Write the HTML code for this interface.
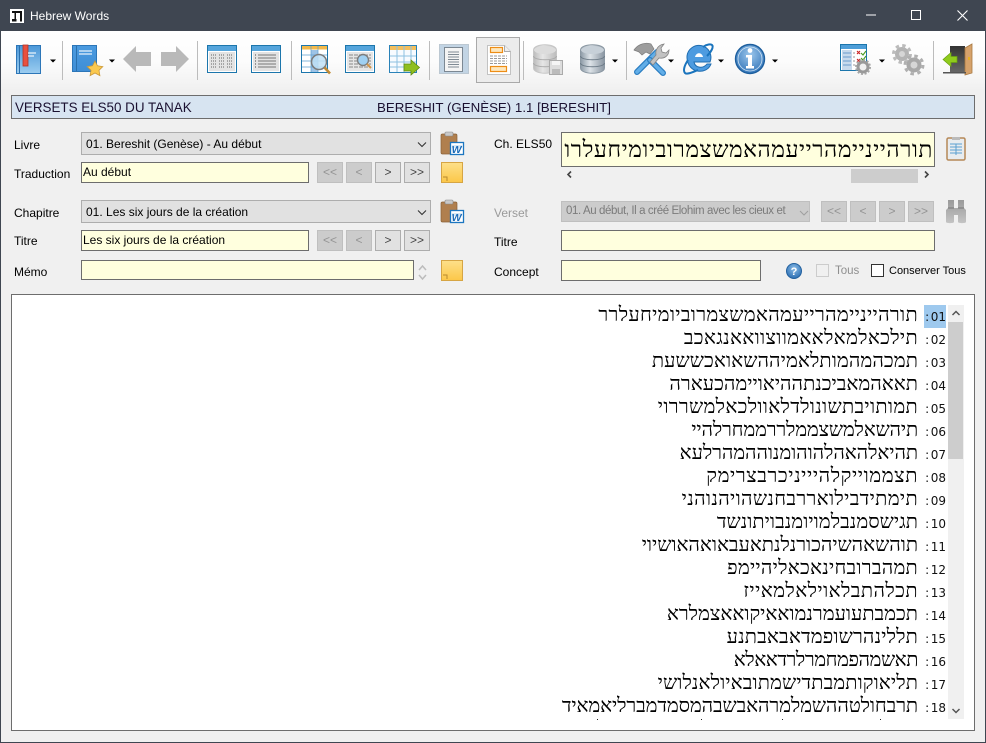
<!DOCTYPE html>
<html><head><meta charset="utf-8"><title>Hebrew Words</title>
<style>
html,body{margin:0;padding:0;width:986px;height:743px;overflow:hidden;background:#f0f0f0}
body{position:relative;font-family:"Liberation Sans",sans-serif;font-size:12px;color:#000}
.a{position:absolute;box-sizing:border-box;white-space:nowrap}
.l{position:absolute;white-space:nowrap;line-height:14px;font-size:12px}
.f{position:absolute;box-sizing:border-box;background:#ffffde;border:1px solid #6d6d6d;white-space:nowrap;padding-left:1px;line-height:19px;font-size:12px}
.c{position:absolute;box-sizing:border-box;background:#e1e1e1;border:1px solid #adadad;white-space:nowrap;padding-left:4px;line-height:23px;font-size:12px;overflow:hidden}
.b{position:absolute;box-sizing:border-box;width:26px;height:21px;background:#e1e1e1;border:1px solid #adadad;text-align:center;line-height:18px;font-size:12px;color:#444}
.d{background:#ccc;border-color:#bfbfbf;color:#949494}
.r{position:absolute;right:56px;white-space:nowrap;direction:rtl;font-family:"Liberation Serif",serif;font-size:20px;line-height:23px;height:23px;color:#000}
.n{position:absolute;left:924px;width:22px;height:23px;text-align:right;font-family:"DejaVu Sans",sans-serif;font-size:12px;line-height:24px;color:#111}
.n i{font-style:normal;margin-right:1.500px}
</style></head><body>
<div class="a" style="left:0;top:0;width:986px;height:31px;background:#3f4651"></div>
<div class="a" style="left:30px;top:9px;color:#fff;font-size:12px;line-height:14px">Hebrew Words</div>
<div class="a" style="left:0;top:31px;width:986px;height:60px;background:linear-gradient(#fff 0,#fcfcfc 30px,#f0f0f0 60px)"></div>
<div class="a" style="left:0;top:31px;width:1px;height:712px;background:#3f4651"></div>
<div class="a" style="left:985px;top:31px;width:1px;height:712px;background:#3f4651"></div>
<div class="a" style="left:0;top:742px;width:986px;height:1px;background:#3f4651"></div>
<div class="a" style="left:476px;top:37px;width:44px;height:46px;background:#ececec;border:1px solid #a9a9a9"></div>

<svg class="a" style="left:0;top:0" width="986" height="130" viewBox="0 0 986 130">
<defs>
<linearGradient id="bk" x1="0" y1="0" x2="0" y2="1"><stop offset="0" stop-color="#4a97d8"/><stop offset="1" stop-color="#9ccdf0"/></linearGradient>
<linearGradient id="bk2" x1="0" y1="0" x2="0" y2="1"><stop offset="0" stop-color="#4b9be0"/><stop offset="1" stop-color="#3f8ed6"/></linearGradient>
<linearGradient id="db" x1="0" y1="0" x2="1" y2="0"><stop offset="0" stop-color="#8b99a5"/><stop offset=".4" stop-color="#dde3e8"/><stop offset="1" stop-color="#8995a1"/></linearGradient>
<linearGradient id="dbg" x1="0" y1="0" x2="1" y2="0"><stop offset="0" stop-color="#bbb"/><stop offset=".4" stop-color="#e6e6e6"/><stop offset="1" stop-color="#bcbcbc"/></linearGradient>
<radialGradient id="inf" cx=".5" cy=".35" r=".7"><stop offset="0" stop-color="#9cc7ec"/><stop offset="1" stop-color="#2b6fb5"/></radialGradient>
<linearGradient id="dr" x1="0" y1="0" x2="0" y2="1"><stop offset="0" stop-color="#333"/><stop offset="1" stop-color="#666"/></linearGradient>
</defs>
<!-- title icon -->
<rect x="10" y="9" width="14" height="14" fill="#fff"/>
<path d="M12 11h10v10.500h-2V13h-4v6.500h-1.500V13H12z" fill="#111"/>
<path d="M12 19h4.500v2.500H12z" fill="#111"/>
<!-- window buttons -->
<path d="M866 15h10" stroke="#fff" stroke-width="1"/>
<rect x="911.500" y="10.500" width="9" height="9" fill="none" stroke="#fff"/>
<path d="M957.500 10.500l10 10M967.500 10.500l-10 10" stroke="#fff" stroke-width="1.100"/>
<!-- separators -->
<g fill="#bcbcbc"><rect x="62" y="41" width="1" height="39"/><rect x="197" y="41" width="1" height="39"/><rect x="291" y="41" width="1" height="39"/><rect x="429" y="41" width="1" height="39"/><rect x="523" y="41" width="1" height="39"/><rect x="626" y="41" width="1" height="39"/><rect x="933" y="41" width="1" height="39"/></g>
<!-- dropdown arrows -->
<g fill="#000"><path d="M50 59.500h6l-3 3zM109 59.500h6l-3 3zM612 59.500h6l-3 3zM668 59.500h6l-3 3zM718 59.500h6l-3 3zM772 59.500h6l-3 3zM879 59.500h6l-3 3z"/></g>
<!-- book 1 -->
<rect x="16.500" y="45.500" width="24" height="28" fill="url(#bk)" stroke="#2c76b8"/>
<rect x="19" y="46" width="1" height="27" fill="#2a70ad"/>
<rect x="23" y="45" width="5" height="21" fill="#e8503f" stroke="#b13327" stroke-width=".8"/>
<path d="M28 53h8M28 56h6" stroke="#e8f3fb" stroke-width="1.300"/>
<!-- book 2 -->
<rect x="72.500" y="45.500" width="24" height="26" fill="url(#bk2)" stroke="#2c76b8"/>
<rect x="76" y="46" width="1" height="25" fill="#2a70ad"/>
<path d="M79 51h13M79 54h13" stroke="#e8f3fb" stroke-width="1.300"/>
<path d="M95 61l2.500 4.800 5.300.8-3.800 3.700.9 5.300-4.900-2.600-4.900 2.600.9-5.300-3.800-3.700 5.300-.8z" fill="#fbc94f" stroke="#c9983a" stroke-width=".8"/>
<!-- arrows -->
<path d="M123 59l13-13v6h15v14h-15v6z" fill="#b9b9b9"/>
<path d="M189 59l-13-13v6h-15v14h15v6z" fill="#b9b9b9"/>
<!-- table 1 -->
<rect x="207.500" y="45.500" width="29" height="27" fill="#fff" stroke="#1c76ac"/>
<rect x="208" y="46" width="28" height="5" fill="#55a5dc"/>
<rect x="209" y="52" width="26" height="19" fill="#e3e3e3"/>
<path d="M211 55h6M219 55h6M227 55h6M211 58h6M219 58h6M227 58h6M211 61h6M219 61h6M227 61h6M211 64h6M219 64h6M227 64h6M211 67h6M219 67h6M227 67h6" stroke="#666" stroke-dasharray="1 1"/>
<!-- list -->
<rect x="251.500" y="45.500" width="29" height="27" fill="#fff" stroke="#1c76ac"/>
<rect x="252" y="46" width="28" height="5" fill="#55a5dc"/>
<rect x="253" y="52" width="26" height="19" fill="#e3e3e3"/>
<path d="M258 55h18M258 58h18M258 61h18M258 64h18M258 67h18" stroke="#777"/>
<path d="M255 55h1M255 58h1M255 61h1M255 64h1M255 67h1" stroke="#444"/>
<!-- table+lens -->
<rect x="301.500" y="45.500" width="26" height="27" fill="#fff" stroke="#1c76ac"/>
<rect x="302" y="46" width="25" height="3.500" fill="#f3b94a"/>
<rect x="311" y="50" width="7" height="22" fill="#9dc3e6"/>
<path d="M302 55h25M302 61h25M302 67h25M311 46v26M318 46v26" stroke="#5ea0d0" stroke-width=".7"/>
<circle cx="319" cy="62" r="7.500" fill="#bfe0f6" fill-opacity=".85" stroke="#7c7c7c" stroke-width="1.500"/>
<path d="M324.500 67.500l5.500 6" stroke="#c08a34" stroke-width="2.600"/>
<!-- list+lens -->
<rect x="345.500" y="45.500" width="29" height="27" fill="#fff" stroke="#1c76ac"/>
<rect x="346" y="46" width="28" height="5" fill="#55a5dc"/>
<rect x="347" y="52" width="26" height="19" fill="#e6e6e6"/>
<path d="M349 55h22M349 58h22M349 61h22M349 64h22M349 67h22" stroke="#888" stroke-dasharray="4 1"/>
<circle cx="363" cy="60" r="5.500" fill="#9fd0f2" stroke="#7d7d7d" stroke-width="1.400"/>
<path d="M367 64l4 4" stroke="#d0964a" stroke-width="2"/>
<!-- table arrow -->
<rect x="389.500" y="45.500" width="27" height="27" fill="#f7fbff" stroke="#2a82b8"/>
<rect x="390" y="46" width="26" height="4" fill="#f3bf5d"/>
<path d="M390 56h26M390 62h26M390 67h26M397 46v26M404 46v26M411 46v26" stroke="#8ec0e2"/>
<path d="M404 64h7v-4l8.500 7.500-8.500 7.500v-4h-7z" fill="#8fbf1f" stroke="#5e8c12" stroke-width=".8"/>
<!-- page view -->
<rect x="439.500" y="44.500" width="29" height="29" fill="#c2d4e4" stroke="#bcc8d2"/>
<rect x="444.500" y="47.500" width="18" height="24" fill="#f4f4f4" stroke="#7c8893"/>
<path d="M448 52h11M448 54.500h11M448 57h11M448 59.500h11M448 62h11M448 64.500h11M448 67h11" stroke="#7f8a94"/>
<!-- active doc -->
<path d="M487.500 45.500h17l6 6v23h-23z" fill="#fff" stroke="#c2c2c2"/>
<path d="M504.500 45.500v6h6" fill="#eee" stroke="#aaa"/>
<rect x="490.500" y="47.500" width="12" height="5" fill="#fde7bd" stroke="#ed8d16" stroke-width="1.200"/>
<path d="M490 56h17M490 58.500h17M490 61h17M490 63.500h17" stroke="#999" stroke-dasharray="3 1"/>
<rect x="490.500" y="66.500" width="16" height="5" fill="#fde7bd" stroke="#ed8d16" stroke-width="1.200"/>
<!-- db gray -->
<path d="M533.500 50c0-7 23-7 23 0v18c0 7-23 7-23 0z" fill="url(#dbg)" stroke="#c6c6c6"/>
<path d="M533.500 56c0 5 23 5 23 0M533.500 63c0 5 23 5 23 0" fill="none" stroke="#aaa"/>
<ellipse cx="545" cy="50" rx="11" ry="4" fill="#dcdcdc"/>
<rect x="549.500" y="60.500" width="13" height="14" fill="#ddd" stroke="#aaa"/>
<rect x="552" y="61" width="8" height="4" fill="#f5f5f5"/><rect x="552" y="69" width="8" height="5" fill="#bbb"/>
<!-- db -->
<path d="M580.500 50c0-7 24-7 24 0v18c0 7-24 7-24 0z" fill="url(#db)" stroke="#8a97a2"/>
<path d="M580.500 56c0 5 24 5 24 0M580.500 63c0 5 24 5 24 0" fill="none" stroke="#6d7b87"/>
<ellipse cx="592.500" cy="50" rx="11.500" ry="4" fill="#c7d0d8"/>
<!-- tools -->
<path d="M637 72l20-20" stroke="#2c7ec2" stroke-width="6" stroke-linecap="round"/>
<path d="M637 72l20-20" stroke="#62aee8" stroke-width="3.500" stroke-linecap="round"/>
<path d="M663 73l-13-13" stroke="#2c7ec2" stroke-width="6" stroke-linecap="round"/>
<path d="M663 73l-13-13" stroke="#62aee8" stroke-width="3.500" stroke-linecap="round"/>
<path d="M634 50c4-6 12-8 17-6l3 5-4 5-4-2-4 3-3-3c-2-1-3-1-5-2z" fill="#9d9d9d" stroke="#7d7d7d" stroke-width=".7"/>
<path d="M650 62l6-7c-1-5 2-10 8-11l-3 4 1 4 4 1 3-3c0 6-5 9-10 8l-6 7z" fill="#c2c2c2" stroke="#858585" stroke-width=".8"/>
<!-- IE -->
<path d="M687 56a12 12 0 1 1 23 6h-16c1 6 9 7 13 2h4c-4 11-23 10-24-6z" fill="#4d9be0" stroke="#1f6db0"/>
<path d="M695 57h8c-1-5-7-5-8 0z" fill="#fff"/>
<path d="M703 47c4-3 8-3 9-2 2 2-1 7-5 11M688 60c-4 6-5 11-3 13 2 2 8-1 13-3" fill="none" stroke="#1a74bd" stroke-width="2"/>
<!-- info -->
<circle cx="750" cy="59" r="14.500" fill="url(#inf)" stroke="#1e5f9e" stroke-width="1.400"/>
<circle cx="750" cy="59" r="12" fill="none" stroke="#cfe3f4" stroke-width=".8"/>
<circle cx="750" cy="50.500" r="2.400" fill="#fff"/>
<path d="M746 55h6v11h2v2.500h-8V66h2v-8.500h-2z" fill="#fff"/>
<!-- settings table -->
<rect x="840.500" y="44.500" width="26" height="26" fill="#fff" stroke="#1c76ac"/>
<rect x="841" y="45" width="25" height="4" fill="#4d9ed8"/>
<rect x="842" y="50" width="10" height="20" fill="#c7d9ec"/>
<path d="M843 53h8M843 57h8M843 61h8M843 65h8" stroke="#6b9acb"/>
<path d="M853 53h2M853 57h2M853 61h2M853 65h2" stroke="#999"/>
<path d="M857 51l3 3M860 51l-3 3M857 59l3 3M860 59l-3 3" stroke="#c22" stroke-width="1.100"/>
<path d="M861 53l2 2 3-4M861 58l2 2 3-4" fill="none" stroke="#4a9c20" stroke-width="1.100"/>
<circle cx="863" cy="67" r="5" fill="#f0f0f0" stroke="#999" stroke-width="3"/>
<circle cx="863" cy="67" r="7" fill="none" stroke="#a5a5a5" stroke-width="2" stroke-dasharray="2 1.660"/>
<!-- gears -->
<g><circle cx="902" cy="54" r="5" fill="#d6d6d6" stroke="#b4b4b4" stroke-width="4"/><circle cx="902" cy="54" r="8.500" fill="none" stroke="#bcbcbc" stroke-width="3" stroke-dasharray="3.400 3.270"/>
<circle cx="914" cy="65" r="5.500" fill="#d6d6d6" stroke="#a8a8a8" stroke-width="4"/><circle cx="914" cy="65" r="9" fill="none" stroke="#b0b0b0" stroke-width="3" stroke-dasharray="3.500 3.570"/></g>
<!-- door -->
<rect x="950" y="46" width="15" height="26" fill="url(#dr)"/>
<path d="M965 48l7-4v29l-7 2z" fill="#d6a26b" stroke="#a87942" stroke-width=".8"/>
<rect x="968" y="57" width="2" height="3" fill="#e8b020"/>
<path d="M943 72h23v1.500h-23z" fill="#555"/>
<path d="M943 59.500l8-7v4h6v6h-6v4z" fill="#8fcb1c" stroke="#6aa012" stroke-width=".7"/>
</svg>

<!-- header -->
<div class="a" style="left:11px;top:95px;width:964px;height:24px;background:#d7e4f1;border:1px solid #6d6d6d"></div>
<div class="l" style="left:15px;top:100px;font-size:13.400px;line-height:16px;color:#1a1030">VERSETS ELS50 DU TANAK</div>
<div class="l" style="left:377px;top:100px;font-size:13.300px;line-height:16px;color:#1a1030">BERESHIT (GENÈSE) 1.1 [BERESHIT]</div>

<!-- left form -->
<div class="l" style="left:14px;top:138px">Livre</div>
<div class="c" style="left:81px;top:132px;width:350px;height:23px">01. Bereshit (Genèse) - Au début</div>
<div class="l" style="left:14px;top:167px">Traduction</div>
<div class="f" style="left:81px;top:162px;width:228px;height:21px">Au début</div>
<div class="b d" style="left:317px;top:162px">&lt;&lt;</div><div class="b d" style="left:346px;top:162px">&lt;</div><div class="b" style="left:375px;top:162px">&gt;</div><div class="b" style="left:404px;top:162px">&gt;&gt;</div>
<div class="l" style="left:14px;top:206px">Chapitre</div>
<div class="c" style="left:81px;top:200px;width:350px;height:23px">01. Les six jours de la création</div>
<div class="l" style="left:14px;top:234px">Titre</div>
<div class="f" style="left:81px;top:230px;width:228px;height:21px">Les six jours de la création</div>
<div class="b d" style="left:317px;top:230px">&lt;&lt;</div><div class="b d" style="left:346px;top:230px">&lt;</div><div class="b" style="left:375px;top:230px">&gt;</div><div class="b" style="left:404px;top:230px">&gt;&gt;</div>
<div class="l" style="left:14px;top:265px">Mémo</div>
<div class="f" style="left:81px;top:260px;width:333px;height:20px"></div>

<!-- right form -->
<div class="l" style="left:494px;top:137px">Ch. ELS50</div>
<div class="f" style="left:561px;top:132px;width:374px;height:35px;padding:0 1px;overflow:hidden;direction:rtl;font-family:'Liberation Serif',serif;font-size:23px;line-height:33px;color:#000;letter-spacing:.55px">תורהייניימהרייעמהאמשצמרוביומיחעלרו</div>
<div class="a" style="left:851px;top:169px;width:67px;height:14px;background:#cdcdcd"></div>
<div class="l" style="left:494px;top:206px;color:#9a9a9a">Verset</div>
<div class="c d" style="left:561px;top:201px;width:249px;height:21px;line-height:19px;color:#7b7b7b;font-size:11.500px;letter-spacing:-.4px">01. Au début, Il a créé Elohim avec les cieux et</div>
<div class="b d" style="left:821px;top:201px">&lt;&lt;</div><div class="b d" style="left:850px;top:201px">&lt;</div><div class="b d" style="left:879px;top:201px">&gt;</div><div class="b d" style="left:908px;top:201px">&gt;&gt;</div>
<div class="l" style="left:494px;top:235px">Titre</div>
<div class="f" style="left:561px;top:230px;width:374px;height:21px"></div>
<div class="l" style="left:494px;top:265px">Concept</div>
<div class="f" style="left:561px;top:260px;width:200px;height:21px"></div>
<div class="a" style="left:816px;top:264px;width:13px;height:13px;background:#f0f0f0;border:1px solid #ccc"></div>
<div class="l" style="left:835px;top:264px;color:#8f8f8f;font-size:11.500px">Tous</div>
<div class="a" style="left:871px;top:264px;width:13px;height:13px;background:#fff;border:1px solid #333"></div>
<div class="l" style="left:889px;top:264px;font-size:11px">Conserver Tous</div>

<svg class="a" style="left:0;top:125px" width="986" height="170" viewBox="0 125 986 170">
<defs><linearGradient id="nt" x1="0" y1="0" x2="0" y2="1"><stop offset="0" stop-color="#fde08a"/><stop offset="1" stop-color="#fcc748"/></linearGradient>
<radialGradient id="hp" cx=".5" cy=".35" r=".7"><stop offset="0" stop-color="#8cbde8"/><stop offset="1" stop-color="#2468ae"/></radialGradient>
<linearGradient id="bn" x1="0" y1="0" x2="0" y2="1"><stop offset="0" stop-color="#9a9a9a"/><stop offset="1" stop-color="#c4c4c4"/></linearGradient></defs>
<!-- combo chevrons -->
<path d="M418 142.500l4 4 4-4M418 210.500l4 4 4-4" fill="none" stroke="#333" stroke-width="1.100"/>
<path d="M800 211l4 4 4-4" fill="none" stroke="#a0a0a0" stroke-width="1.100"/>
<!-- clip+word -->
<g><rect x="441" y="134" width="16" height="20" rx="1.500" fill="#b07f4e" stroke="#8a6238" stroke-width=".7"/><rect x="445" y="132" width="8" height="4" rx="1" fill="#c9c9c9" stroke="#888" stroke-width=".6"/><rect x="450.500" y="142.500" width="13" height="12" fill="#fff" stroke="#1c76c0" stroke-width="1.300"/><path d="M452 145h10v3h-10z" fill="#d6e8f6"/><text x="451.600" y="153" font-family="Liberation Sans" font-weight="bold" font-style="italic" font-size="10.500" fill="#1c6bb8">W</text></g>
<g transform="translate(0,68)"><rect x="441" y="134" width="16" height="20" rx="1.500" fill="#b07f4e" stroke="#8a6238" stroke-width=".7"/><rect x="445" y="132" width="8" height="4" rx="1" fill="#c9c9c9" stroke="#888" stroke-width=".6"/><rect x="450.500" y="142.500" width="13" height="12" fill="#fff" stroke="#1c76c0" stroke-width="1.300"/><path d="M452 145h10v3h-10z" fill="#d6e8f6"/><text x="451.600" y="153" font-family="Liberation Sans" font-weight="bold" font-style="italic" font-size="10.500" fill="#1c6bb8">W</text></g>
<!-- notes -->
<rect x="441.500" y="162.500" width="21" height="20" fill="url(#nt)" stroke="#d6a544"/><path d="M443 177h4v4" fill="none" stroke="#b98a2e"/>
<rect x="441.500" y="260.500" width="21" height="20" fill="url(#nt)" stroke="#d6a544"/><path d="M443 275h4v4" fill="none" stroke="#b98a2e"/>
<!-- spin -->
<path d="M419 270l3.500-4 3.500 4M419 275l3.500 4 3.500-4" fill="none" stroke="#bcbcbc" stroke-width="1.500"/>
<!-- scroll chevrons -->
<path d="M571 171.500l-3 3 3 3M925 171.500l3 3-3 3" fill="none" stroke="#444" stroke-width="1.600"/>
<!-- clipboard table -->
<rect x="947" y="138" width="18" height="22" rx="1.500" fill="#e8ecef" stroke="#b58857" stroke-width="1.500"/>
<rect x="952" y="137" width="8" height="3" fill="#bbb"/>
<path d="M950 144h12M950 147h12M950 150h12M950 153h12M956 144v11" stroke="#5aa0d0"/>
<!-- binoculars -->
<path d="M948 200h6v8h4v-8h6v8l2 2v12c0 1.500-8 1.500-8 0v-7h-4v7c0 1.500-8 1.500-8 0v-12l2-2z" fill="url(#bn)"/>
<path d="M948 208h6M958 208h6" stroke="#777"/>
<!-- help -->
<circle cx="794" cy="271" r="7.500" fill="url(#hp)" stroke="#22609e"/>
<text x="794" y="275" text-anchor="middle" font-family="Liberation Sans" font-weight="bold" font-size="11" fill="#fff">?</text>
</svg>

<!-- memo -->
<div class="a" style="left:11px;top:294px;width:964px;height:437px;background:#fff;border:1px solid #6d6d6d;overflow:hidden"></div>
<div class="a" style="left:948px;top:305px;width:16px;height:414px;background:#f0f0f0"></div>
<div class="a" style="left:948px;top:322px;width:15px;height:137px;background:#cdcdcd"></div>
<svg class="a" style="left:948px;top:305px" width="16" height="414"><path d="M4.500 10l3.500-3.500 3.500 3.500M4.500 404l3.500 3.500 3.500-3.500" fill="none" stroke="#555" stroke-width="1.500"/></svg>
<div class="a" style="left:924px;top:305px;width:22px;height:23px;background:#9ec9ee"></div>

<div class="a" style="left:12px;top:295px;width:962px;height:435px;overflow:hidden">
<div class="r" style="top:9px;letter-spacing:.31px">תורהייניימהרייעמהאמשצמרוביומיחעלרר</div>
<div class="r" style="top:32px;letter-spacing:.32px">תילכאלמאלאאמווצוואאנגאכב</div>
<div class="r" style="top:55px;letter-spacing:.08px">תמכהמהמותלאמיההשאואכששעת</div>
<div class="r" style="top:78px">תאאהמאביכנתההיאויימהכעארה</div>
<div class="r" style="top:101px;letter-spacing:.31px">תמותויבתשונולדלאוולכאלמשררוי</div>
<div class="r" style="top:124px;letter-spacing:-.17px">תיהשאלמשצממלררממחרלהיי</div>
<div class="r" style="top:147px;letter-spacing:-.08px">תהיאלהאהלהוהומנוההמהרלעא</div>
<div class="r" style="top:170px;letter-spacing:.58px">תצממוייקלהיייניכרבצרימק</div>
<div class="r" style="top:193px;letter-spacing:.33px">תימתידבילואררבחנשהויהנוהני</div>
<div class="r" style="top:216px;letter-spacing:.04px">תגישסמנבלמויומנבויתונשד</div>
<div class="r" style="top:239px;letter-spacing:-.03px">תוהשאהשיהכורנלנתאעבאואהאושיוי</div>
<div class="r" style="top:262px;letter-spacing:.24px">תמהברובחינאכאליהיימפ</div>
<div class="r" style="top:285px;letter-spacing:.42px">תכלהתבלאוילאלמאייז</div>
<div class="r" style="top:308px">תכמבתעועמרנמואאיקואאצמלרא</div>
<div class="r" style="top:331px;letter-spacing:.15px">תללינהרשופמדאבאבתנע</div>
<div class="r" style="top:354px;letter-spacing:-.44px">תאשמהפמחמרלרדאאלא</div>
<div class="r" style="top:377px;letter-spacing:.1px">תליאוקותמבתדישמתובאיולאנלושי</div>
<div class="r" style="top:400px;letter-spacing:-.11px">תרבחולטההשמלמרהאבשבהמסמדמברליאמאיד</div>
</div>
<div class="a" style="left:597px;top:719px;width:1px;height:1px;background:#222"></div>
<div class="a" style="left:701px;top:719px;width:1px;height:1px;background:#222"></div>
<div class="a" style="left:782px;top:719px;width:1px;height:1px;background:#222"></div>
<div class="a" style="left:880px;top:719px;width:1px;height:1px;background:#222"></div>
<div class="n" style="top:305px"><i>:</i>01</div><div class="n" style="top:328px"><i>:</i>02</div><div class="n" style="top:351px"><i>:</i>03</div><div class="n" style="top:374px"><i>:</i>04</div><div class="n" style="top:397px"><i>:</i>05</div><div class="n" style="top:420px"><i>:</i>06</div><div class="n" style="top:443px"><i>:</i>07</div><div class="n" style="top:466px"><i>:</i>08</div><div class="n" style="top:489px"><i>:</i>09</div><div class="n" style="top:512px"><i>:</i>10</div><div class="n" style="top:535px"><i>:</i>11</div><div class="n" style="top:558px"><i>:</i>12</div><div class="n" style="top:581px"><i>:</i>13</div><div class="n" style="top:604px"><i>:</i>14</div><div class="n" style="top:627px"><i>:</i>15</div><div class="n" style="top:650px"><i>:</i>16</div><div class="n" style="top:673px"><i>:</i>17</div><div class="n" style="top:696px"><i>:</i>18</div>
</body></html>
